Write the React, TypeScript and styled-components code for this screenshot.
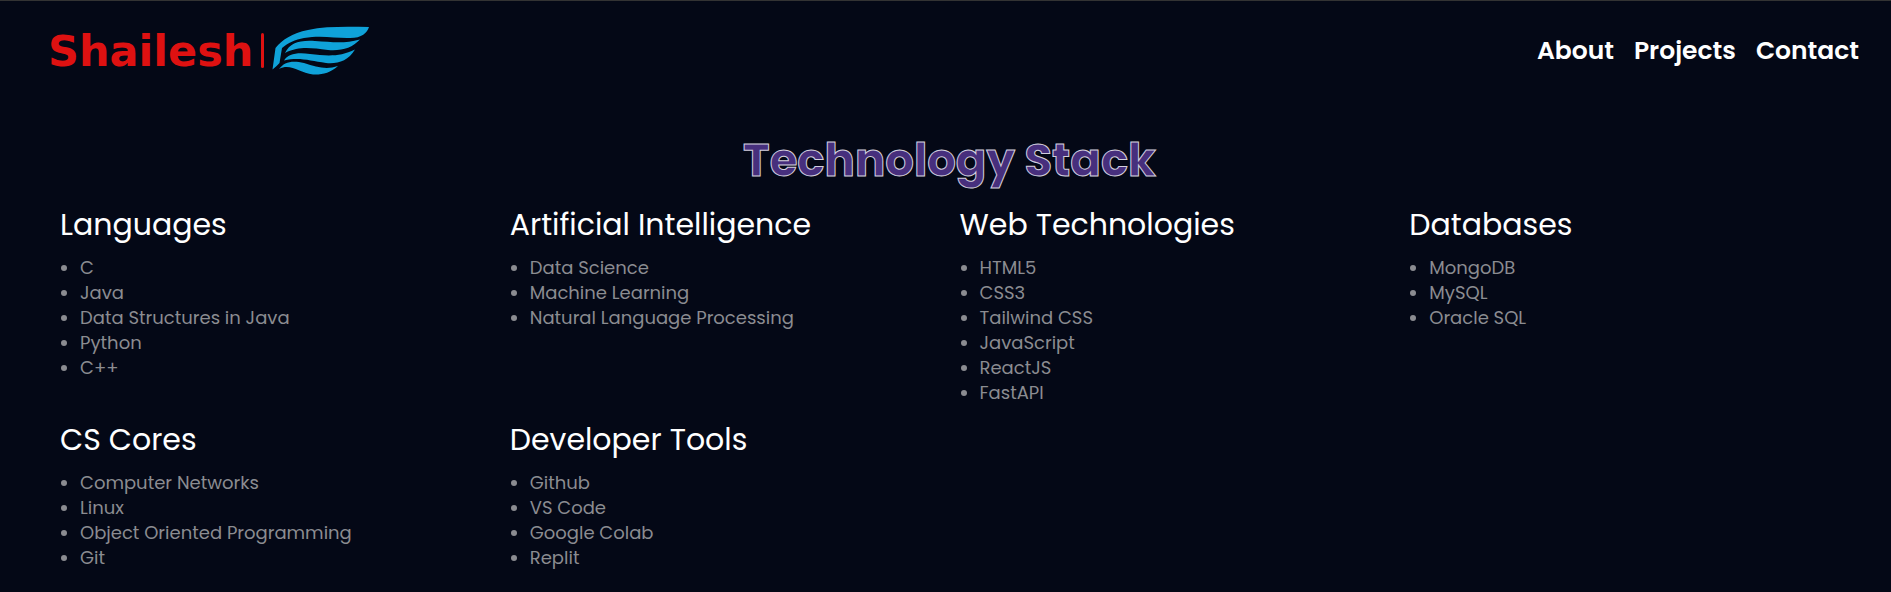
import React from "react";
import styled, { createGlobalStyle } from "styled-components";

const GlobalStyle = createGlobalStyle`
  * { box-sizing: border-box; }
  body {
    margin: 0;
    background: #040816;
    color: #fff;
    font-family: Poppins, Inter, sans-serif;
  }
`;

const Page = styled.div`
  min-height: 100vh;
  border-top: 1px solid #333;
  padding: 0 32px 24px 40px;
`;

const Header = styled.header`
  display: flex;
  align-items: center;
  justify-content: space-between;
  height: 99px;
`;

const Brand = styled.a`
  display: flex;
  align-items: center;
  padding-left: 8px;
  color: #de1111;
  text-decoration: none;
`;

const BrandName = styled.span`
  font: bold 43px/48px "DejaVu Sans", sans-serif;
`;

const BrandMark = styled.svg`
  display: block;
  margin-left: 7px;
`;

const Nav = styled.nav`
  display: flex;
  gap: 20px;
`;

const NavLink = styled.a`
  color: #fff;
  font-size: 25px;
  font-weight: 600;
  line-height: 32px;
  text-decoration: none;
`;

const Title = styled.h1`
  margin: 32px 0 0;
  color: #472f7d;
  font-size: 45px;
  font-weight: 700;
  line-height: 58px;
  text-align: center;
  -webkit-text-stroke: 1px #d3cfdd;
`;

const StackGrid = styled.main`
  display: grid;
  grid-template-columns: repeat(4, 1fr);
  padding-left: 20px;
`;

const Group = styled.section`
  padding-top: 15px;
`;

const GroupTitle = styled.h2`
  margin: 0 0 10px;
  font-size: 30px;
  font-weight: 400;
  line-height: 40px;
`;

const List = styled.ul`
  margin: 0;
  padding-left: 20px;
  color: #8b8c91;
  font-size: 18px;
  line-height: 25px;
`;

const groups = [
  { title: "Languages", items: ["C", "Java", "Data Structures in Java", "Python", "C++"] },
  { title: "Artificial Intelligence", items: ["Data Science", "Machine Learning", "Natural Language Processing"] },
  { title: "Web Technologies", items: ["HTML5", "CSS3", "Tailwind CSS", "JavaScript", "ReactJS", "FastAPI"] },
  { title: "Databases", items: ["MongoDB", "MySQL", "Oracle SQL"] },
  { title: "CS Cores", items: ["Computer Networks", "Linux", "Object Oriented Programming", "Git"] },
  { title: "Developer Tools", items: ["Github", "VS Code", "Google Colab", "Replit"] },
];

const links = ["About", "Projects", "Contact"];

export default function App() {
  return (
    <Page>
      <GlobalStyle />
      <Header>
        <Brand href="#" aria-label="Shailesh">
          <BrandName>Shailesh</BrandName>
          <BrandMark width="110" height="50" viewBox="0 0 110 50" aria-hidden="true">
            <rect x="1" y="7" width="3" height="35" rx="1.5" fill="#de1111" />
            <g fill="#0fa2d9">
              <path d="M12.5 43.500 L15.500 22 C22 14 32 7 48 4 C66 0 88 .7 109 1 C107 7 102 12 90 12 C76 12.500 62 9 44 12 C35 13.500 28 17 22 22 L19.500 37 Q17 40 12.500 43.500Z" />
              <path d="M25 27 C30 17 39 14 55 15 C72 16 84 18 100 13.500 C92 22 82 25 68 24 C50 22 40 20 25 27Z" />
              <path d="M24 34.500 C28 28 37 26 50 28 C67 30 80 31 95 23.500 C88 35 78 38 66 37 C50 35 40 31 24 34.500Z" />
              <path d="M19 43 C24 36 32 34 44 37 C57 41 66 44 78 40 C70 47 62 49 53 48.500 C39 47 31 37 19 43Z" />
            </g>
          </BrandMark>
        </Brand>
        <Nav>
          {links.map((label) => (
            <NavLink key={label} href={"#" + label.toLowerCase()}>{label}</NavLink>
          ))}
        </Nav>
      </Header>
      <Title>Technology Stack</Title>
      <StackGrid>
        {groups.map((group) => (
          <Group key={group.title}>
            <GroupTitle>{group.title}</GroupTitle>
            <List>
              {group.items.map((item) => <li key={item}>{item}</li>)}
            </List>
          </Group>
        ))}
      </StackGrid>
    </Page>
  );
}
